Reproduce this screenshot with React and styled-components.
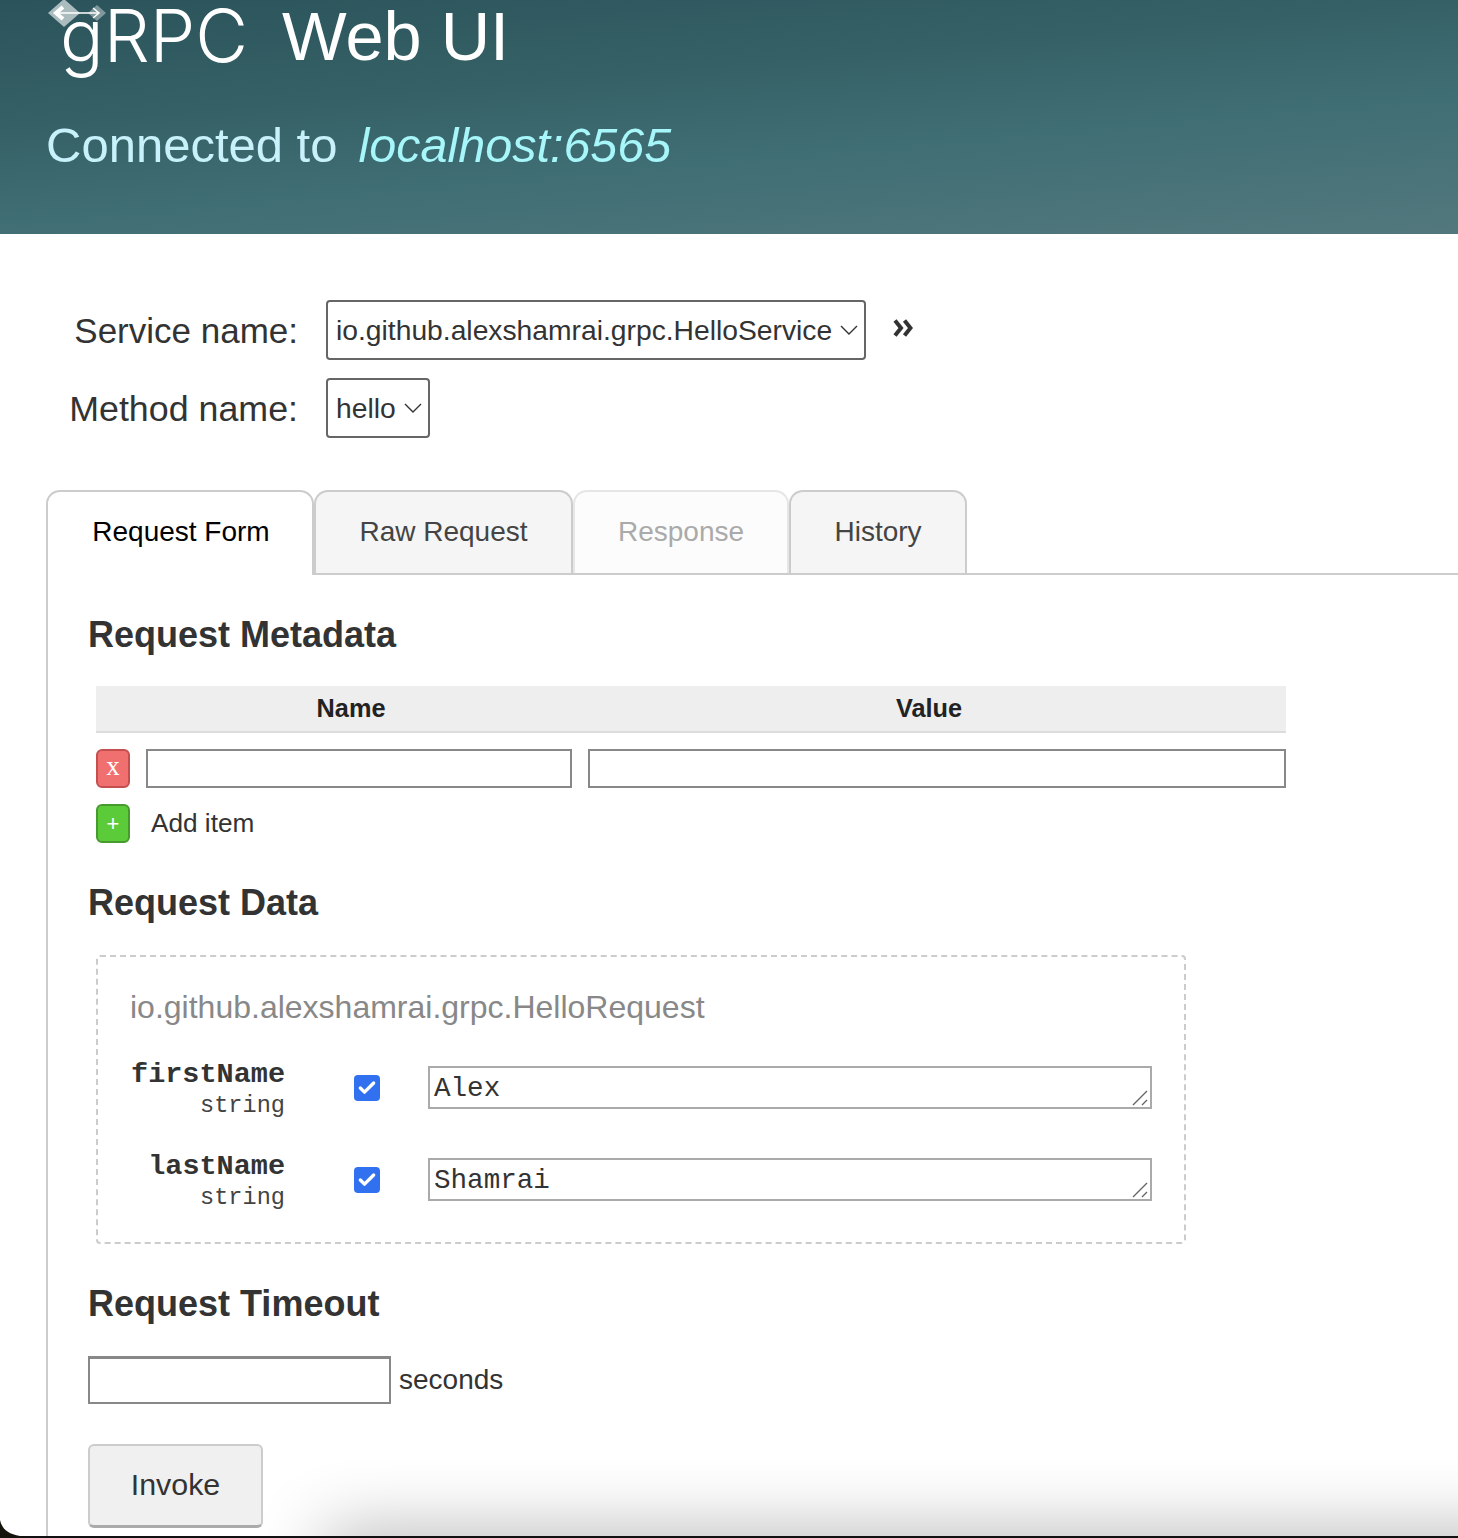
import React from "react"
import styled, { createGlobalStyle } from "styled-components"
import { Check } from "lucide-react"

const GlobalStyle = createGlobalStyle`
  html, body {
    margin: 0;
    padding: 0;
    background: #fff;
  }
  * {
    box-sizing: border-box;
  }
`

const Page = styled.div`
  position: relative;
  width: 1458px;
  height: 1538px;
  overflow: hidden;
  font-family: "Liberation Sans", Arial, sans-serif;
  color: #333;
  background: #fff;
`

const Header = styled.header`
  height: 234px;
  padding-left: 47px;
  background: linear-gradient(175deg, #2b535b 0%, #356166 35%, #3f6e74 62%, #52787d 100%);
`

const TitleRow = styled.div`
  display: flex;
  align-items: flex-start;
  height: 116px;
`

const LogoWrap = styled.div`
  position: relative;
  width: 235px;
  height: 84px;
`

const LogoText = styled.span`
  position: absolute;
  left: 13px;
  top: 0;
  font-family: Inter, sans-serif;
  font-weight: 300;
  font-size: 72.5px;
  line-height: 72px;
  color: #fff;
`

const LogoArrow = styled.svg`
  position: absolute;
  left: 0;
  top: 0;
`

const Title = styled.h1`
  margin: 0;
  font-size: 68.5px;
  line-height: 74px;
  font-weight: 400;
  color: #fff;
`

const Connected = styled.div`
  display: flex;
  gap: 21px;
  margin-left: -1px;
  font-size: 49px;
  line-height: 58px;
  color: #c8f1fb;
`

const Host = styled.span`
  font-style: italic;
  font-size: 48.5px;
  color: #a6f6fa;
`

const Selectors = styled.div`
  padding-top: 66px;
  height: 256px;
`

const SelectorRow = styled.div`
  display: flex;
  align-items: center;
  height: 60px;
  margin-bottom: 18px;
`

const SelectorLabel = styled.label`
  width: 298px;
  padding-top: 2px;
  text-align: right;
  font-size: ${(p) => p.$size}px;
  margin-right: 28px;
`

const SelectBox = styled.div`
  display: flex;
  align-items: center;
  height: 60px;
  padding: 0 6px 0 8px;
  border: 2px solid #666;
  border-radius: 4px;
  font-size: 28.25px;
  color: #333;
  gap: 8px;
`

const Chevron = styled.svg`
  display: block;
  flex: none;
`

const Expand = styled.svg`
  display: block;
  margin: -4px 0 0 27px;
`

const TabBar = styled.nav`
  display: flex;
  height: 85px;
  margin-left: 46px;
  border-bottom: 2px solid #ccc;
`

const Tab = styled.div`
  position: relative;
  z-index: ${(p) => (p.$active ? 1 : 0)};
  width: ${(p) => p.$w}px;
  height: ${(p) => (p.$active ? 85 : 83)}px;
  display: flex;
  align-items: center;
  justify-content: center;
  padding-bottom: ${(p) => (p.$active ? 3 : 1)}px;
  padding-left: ${(p) => (p.$active ? 2 : 0)}px;
  font-size: 28px;
  border: 2px solid ${(p) => (p.$disabled ? "#e6e6e6" : "#ccc")};
  border-bottom: 0;
  border-radius: 14px 14px 0 0;
  background: ${(p) => (p.$active ? "#fff" : p.$disabled ? "#fcfcfc" : "#f5f5f5")};
  color: ${(p) => (p.$active ? "#000" : p.$disabled ? "#aaa" : "#444")};
`

const Content = styled.main`
  margin-left: 46px;
  height: 963px;
  padding: 38px 0 0 40px;
  border-left: 2px solid #ccc;
`

const Heading = styled.h2`
  margin: ${(p) => p.$top}px 0 0;
  font-size: 36px;
  line-height: 44px;
  font-weight: 700;
  color: #333;
`

const MetaBlock = styled.section`
  margin-left: 8px;
  width: 1190px;
`

const MetaHead = styled.div`
  display: grid;
  grid-template-columns: 510px 646px 34px;
  height: 47px;
  margin-top: 29px;
  align-items: center;
  background: #eee;
  border-bottom: 2px solid #ddd;
  font-size: 25.3px;
  font-weight: 700;
  text-align: center;
  color: #222;
`

const MetaRow = styled.div`
  display: flex;
  align-items: center;
  gap: 16px;
  height: 39px;
  margin-top: 16px;
`

const IconButton = styled.span`
  flex: none;
  display: flex;
  align-items: center;
  justify-content: center;
  width: 34px;
  height: 39px;
  border: 2px solid ${(p) => (p.$add ? "#469a2e" : "#c44f4f")};
  border-radius: 6px;
  background: ${(p) => (p.$add ? "#5ccb3a" : "#f07070")};
  color: #fff;
  font-family: ${(p) => (p.$add ? '"Liberation Sans"' : '"Liberation Serif"')}, serif;
  font-size: ${(p) => (p.$add ? 22 : 27)}px;
  line-height: 1;
  padding-bottom: ${(p) => (p.$add ? 0 : 4)}px;
`

const MetaInput = styled.input`
  flex: none;
  width: ${(p) => p.$w}px;
  height: 39px;
  border: 2px solid #888;
  background: #fff;
  outline: none;
`

const AddLabel = styled.span`
  font-size: 26.2px;
  margin-left: 5px;
`

const DataBox = styled.section`
  margin: 30px 0 0 8px;
  width: 1090px;
  height: 289px;
  padding: 28px 32px 0 32px;
  border: 2px dashed #ccc;
  border-radius: 4px;
`

const TypeName = styled.div`
  font-size: 32px;
  line-height: 44px;
  color: #888;
`

const FieldRow = styled.div`
  display: flex;
  align-items: center;
  height: 62px;
  margin-top: ${(p) => p.$top}px;
`

const FieldLabel = styled.div`
  width: 155px;
  margin-top: 20px;
  text-align: right;
  font-family: "Liberation Mono", monospace;
`

const FieldName = styled.div`
  font-size: 28.5px;
  line-height: 32px;
  font-weight: 700;
  color: #333;
`

const FieldType = styled.div`
  font-size: 23.6px;
  line-height: 30px;
  color: #444;
`

const CheckBox = styled.span`
  display: flex;
  align-items: center;
  justify-content: center;
  width: 26px;
  height: 26px;
  margin: 16px 48px 0 69px;
  border-radius: 4px;
  background: #3171f0;
  color: #fff;
`

const AreaWrap = styled.div`
  position: relative;
  width: 724px;
  height: 43px;
  margin-top: 14px;
`

const FieldArea = styled.textarea`
  display: block;
  width: 100%;
  height: 100%;
  padding: 5px 4px 0;
  border: 2px solid #aaa;
  border-radius: 0;
  outline: none;
  resize: none;
  overflow: hidden;
  font-family: "Liberation Mono", monospace;
  font-size: 27.6px;
  line-height: 32px;
  color: #333;
`

const Grip = styled.svg`
  position: absolute;
  right: 4px;
  bottom: 3px;
`

const TimeoutRow = styled.div`
  display: flex;
  align-items: center;
  margin-top: 30px;
  gap: 8px;
  font-size: 28px;
`

const TimeoutInput = styled.input`
  width: 303px;
  height: 48px;
  border: 2px solid #888;
  border-top-width: 3px;
  background: #fff;
  outline: none;
`

const InvokeButton = styled.button`
  display: block;
  width: 175px;
  height: 84px;
  margin-top: 40px;
  padding: 0 0 2px;
  border: 2px solid #ccc;
  border-bottom-color: #aaa;
  border-bottom-width: 3px;
  border-radius: 6px;
  background: #f0f0f0;
  font-family: inherit;
  font-size: 30.4px;
  color: #333;
`

// shadow of the next window, lies over the page at the bottom edge
const WindowShadow = styled.div`
  position: absolute;
  left: 325px;
  right: -120px;
  top: 1536px;
  height: 60px;
  box-shadow: 0 -4px 70px rgba(0, 0, 0, 0.3);
`

const BottomEdge = styled.div`
  position: absolute;
  left: 0;
  right: 0;
  bottom: 0;
  height: 2px;
  background: #111;
`

const CornerCut = styled.svg`
  position: absolute;
  left: 0;
  bottom: 0;
`

function Logo() {
  return (
    <LogoWrap>
      <LogoText>gRPC</LogoText>
      <LogoArrow width="62" height="30" viewBox="0 0 62 30">
        <path d="M17 -1 L33 13 L17 27 L1 13 Z" fill="#b9c8c9" opacity="0.9" />
        <path d="M50 5 L59 13 L50 21 L41 13 Z" fill="#8fa5a7" opacity="0.85" />
        <path d="M8 13 H52" stroke="#fff" strokeWidth="1.5" />
        <path d="M16 7 L9 13 L16 19" stroke="#fff" strokeWidth="4" fill="none" />
        <path d="M46 8 L52 13 L46 18" stroke="#fff" strokeWidth="1.5" fill="none" />
      </LogoArrow>
    </LogoWrap>
  )
}

function SelectArrow() {
  return (
    <Chevron width="18" height="10" viewBox="0 0 18 10">
      <path d="M1 1 L9 9 L17 1" fill="none" stroke="#333" strokeWidth="1.4" />
    </Chevron>
  )
}

function Field({ name, value, top }) {
  return (
    <FieldRow $top={top}>
      <FieldLabel>
        <FieldName>{name}</FieldName>
        <FieldType>string</FieldType>
      </FieldLabel>
      <CheckBox>
        <Check size={20} strokeWidth={4} />
      </CheckBox>
      <AreaWrap>
        <FieldArea defaultValue={value} />
        <Grip width="16" height="16" viewBox="0 0 16 16">
          <path d="M1 15 L15 1 M10 15 L15 10" stroke="#666" strokeWidth="1.4" />
        </Grip>
      </AreaWrap>
    </FieldRow>
  )
}

export default function App() {
  return (
    <Page>
      <GlobalStyle />
      <Header>
        <TitleRow>
          <Logo />
          <Title>Web UI</Title>
        </TitleRow>
        <Connected>
          <span>Connected to</span>
          <Host>localhost:6565</Host>
        </Connected>
      </Header>

      <Selectors>
        <SelectorRow>
          <SelectorLabel $size={35}>Service name:</SelectorLabel>
          <SelectBox>
            io.github.alexshamrai.grpc.HelloService
            <SelectArrow />
          </SelectBox>
          <Expand width="20" height="18" viewBox="0 0 20 18">
            <path d="M2 1.5 L8 9 L2 16.5 M11.5 1.5 L17.5 9 L11.5 16.5" fill="none" stroke="#333" strokeWidth="4" />
          </Expand>
        </SelectorRow>
        <SelectorRow>
          <SelectorLabel $size={35.8}>Method name:</SelectorLabel>
          <SelectBox>
            hello
            <SelectArrow />
          </SelectBox>
        </SelectorRow>
      </Selectors>

      <TabBar>
        <Tab $w={268} $active>Request Form</Tab>
        <Tab $w={259}>Raw Request</Tab>
        <Tab $w={216} $disabled>Response</Tab>
        <Tab $w={178}>History</Tab>
      </TabBar>

      <Content>
        <Heading $top={0}>Request Metadata</Heading>
        <MetaBlock>
          <MetaHead>
            <span>Name</span>
            <span>Value</span>
          </MetaHead>
          <MetaRow>
            <IconButton>x</IconButton>
            <MetaInput $w={426} />
            <MetaInput $w={698} />
          </MetaRow>
          <MetaRow>
            <IconButton $add>+</IconButton>
            <AddLabel>Add item</AddLabel>
          </MetaRow>
        </MetaBlock>

        <Heading $top={38}>Request Data</Heading>
        <DataBox>
          <TypeName>io.github.alexshamrai.grpc.HelloRequest</TypeName>
          <Field name="firstName" value="Alex" top={20} />
          <Field name="lastName" value="Shamrai" top={30} />
        </DataBox>

        <Heading $top={38}>Request Timeout</Heading>
        <TimeoutRow>
          <TimeoutInput />
          seconds
        </TimeoutRow>
        <InvokeButton>Invoke</InvokeButton>
      </Content>

      <WindowShadow />
      <BottomEdge />
      <CornerCut width="20" height="18" viewBox="0 0 20 18">
        <path d="M0 0 C2 9 8 14 20 16 L20 18 L0 18 Z" fill="#15140c" />
      </CornerCut>
    </Page>
  )
}
